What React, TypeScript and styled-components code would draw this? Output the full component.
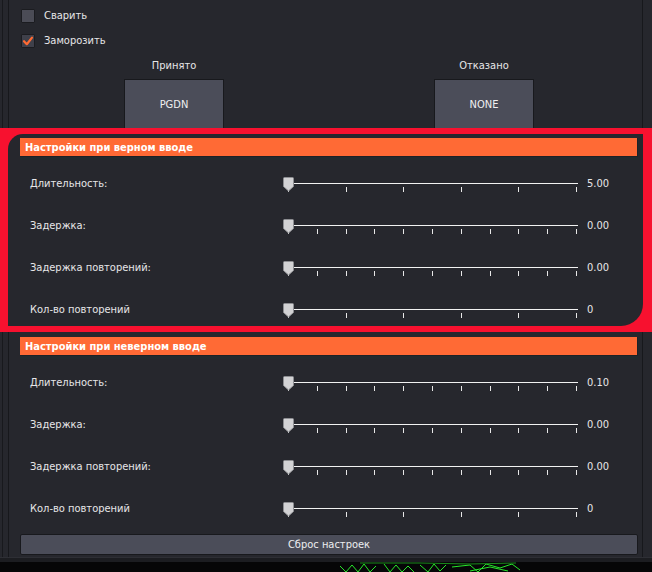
import React from "react";
import styled, { createGlobalStyle } from "styled-components";

const GlobalStyle = createGlobalStyle`
  html, body {
    margin: 0;
    padding: 0;
    background: #26272d;
    overflow: hidden;
  }
  * {
    box-sizing: border-box;
  }
`;

type SliderRow = {
  label: string;
  value: string;
  steps: number;
};

const goodInput: SliderRow[] = [
  { label: "Длительность:", value: "5.00", steps: 5 },
  { label: "Задержка:", value: "0.00", steps: 10 },
  { label: "Задержка повторений:", value: "0.00", steps: 10 },
  { label: "Кол-во повторений", value: "0", steps: 5 },
];

const badInput: SliderRow[] = [
  { label: "Длительность:", value: "0.10", steps: 10 },
  { label: "Задержка:", value: "0.00", steps: 10 },
  { label: "Задержка повторений:", value: "0.00", steps: 10 },
  { label: "Кол-во повторений", value: "0", steps: 5 },
];

const Thumb = () => (
  <ThumbIcon width="11" height="15" viewBox="0 0 11 15">
    <path
      d="M1.5 0.5 H9.5 Q10.5 0.5 10.5 1.5 V9.5 L5.5 14 L0.5 9.5 V1.5 Q0.5 0.5 1.5 0.5 Z"
      fill="#d2d2d4"
      stroke="#8d8e92"
      strokeWidth="1"
    />
  </ThumbIcon>
);

const Slider = ({ steps }: { steps: number }) => (
  <SliderBox>
    <Track />
    <Ticks>
      {Array.from({ length: steps + 1 }).map((_, i) => (
        <Tick key={i} />
      ))}
    </Ticks>
    <Thumb />
  </SliderBox>
);

const Section = ({
  title,
  rows,
  gapTop,
}: {
  title: string;
  rows: SliderRow[];
  gapTop: number;
}) => (
  <SectionBody>
    <Header>{title}</Header>
    <Rows $top={gapTop}>
      {rows.map((row) => (
        <Row key={row.label}>
          <Label>{row.label}</Label>
          <Slider steps={row.steps} />
          <Value>{row.value}</Value>
        </Row>
      ))}
    </Rows>
  </SectionBody>
);

const App = () => {
  return (
    <Page>
      <GlobalStyle />
      <Top>
        <CheckRow>
          <Box />
          <CheckLabel>Сварить</CheckLabel>
        </CheckRow>
        <CheckRow>
          <Box $checked>
            <svg width="12" height="12" viewBox="0 0 12 12">
              <path
                d="M2 6.2 L4.8 9.2 L10 2.6"
                fill="none"
                stroke="#ff6a33"
                strokeWidth="2.2"
                strokeLinecap="round"
                strokeLinejoin="round"
              />
            </svg>
          </Box>
          <CheckLabel>Заморозить</CheckLabel>
        </CheckRow>
        <Keys>
          <KeyColumn>
            <KeyCaption>Принято</KeyCaption>
            <KeyButton>PGDN</KeyButton>
          </KeyColumn>
          <KeyColumn>
            <KeyCaption>Отказано</KeyCaption>
            <KeyButton>NONE</KeyButton>
          </KeyColumn>
        </Keys>
      </Top>

      <Highlight $marked>
        <HighlightInner $marked>
          <Section title="Настройки при верном вводе" rows={goodInput} gapTop={17} />
        </HighlightInner>
      </Highlight>

      <Highlight>
        <HighlightInner>
          <Section title="Настройки при неверном вводе" rows={badInput} gapTop={17} />
          <ResetButton>Сброс настроек</ResetButton>
        </HighlightInner>
      </Highlight>

      <BottomEdge />
      <Footer>
        <svg width="652" height="10" viewBox="0 0 652 10">
          <g fill="none" stroke="#27e62a" strokeWidth="1">
            <polyline points="340,4 346,10 352,3 358,10 364,2 370,10 376,4" />
            <polyline points="384,2 390,10 396,3 402,10 408,4 414,10" />
            <polyline points="420,3 428,10 434,2 440,9 446,3" />
            <polyline points="452,5 470,3 478,10 486,2 500,6 512,2 520,8" />
            <polyline points="470,9 490,5 508,9" />
            <polyline points="360,1 420,1 470,2 516,1" stroke="#1a8a1c" />
          </g>
        </svg>
      </Footer>
    </Page>
  );
};

export default App;

const Page = styled.div`
  width: 652px;
  height: 572px;
  display: flex;
  flex-direction: column;
  font-family: "DejaVu Sans Condensed", "DejaVu Sans", "Liberation Sans", sans-serif;
  font-size: 11px;
  color: #e6e6e8;
  background: linear-gradient(
    to right,
    #26272d 2px,
    #18191d 2px 3px,
    #26272d 3px 8px,
    #17181c 8px 9px,
    #26272d 9px 642px,
    #17181c 642px 643px,
    #26272d 643px
  );
`;

const Top = styled.div`
  height: 128px;
  flex-shrink: 0;
  padding: 9px 0 0 21px;
  display: flex;
  flex-direction: column;
`;

const CheckRow = styled.div`
  display: flex;
  align-items: center;
  gap: 9px;
  height: 14px;
  margin-bottom: 11px;
`;

const Box = styled.div<{ $checked?: boolean }>`
  width: 14px;
  height: 14px;
  display: flex;
  align-items: center;
  justify-content: center;
  background: ${(p) => (p.$checked ? "#3f404a" : "#4b4c56")};
  border: 1px solid #1b1c20;
  border-radius: 1px;
`;

const CheckLabel = styled.span`
  line-height: 14px;
`;

const Keys = styled.div`
  display: flex;
  gap: 210px;
  margin-left: 103px;
`;

const KeyColumn = styled.div`
  width: 100px;
  display: flex;
  flex-direction: column;
  align-items: center;
  gap: 6px;
`;

const KeyCaption = styled.span`
  line-height: 14px;
`;

const KeyButton = styled.div`
  width: 100px;
  height: 50px;
  display: flex;
  align-items: center;
  justify-content: center;
  background: #4b4d59;
  border: 1px solid #18191d;
  color: #f0f0f2;
`;

const Highlight = styled.div<{ $marked?: boolean }>`
  flex-shrink: 0;
  padding: ${(p) => (p.$marked ? "6px 9px 6px 8px" : "5px 9px 0 8px")};
  background: ${(p) => (p.$marked ? "#f7112f" : "transparent")};
`;

const HighlightInner = styled.div<{ $marked?: boolean }>`
  padding: ${(p) => (p.$marked ? "4px 5px 6px 12px" : "0 5px 0 12px")};
  background: ${(p) => (p.$marked ? "#26272d" : "transparent")};
  border-radius: ${(p) => (p.$marked ? "15px 0 22px 0" : "0")};
`;

const SectionBody = styled.div`
  display: flex;
  flex-direction: column;
`;

const Header = styled.div`
  height: 19px;
  padding-left: 5px;
  display: flex;
  align-items: center;
  background: #ff6a35;
  border-right: 1px solid #1d2226;
  border-bottom: 1px solid #1d2226;
  box-shadow: 0 3px 0 #232a2e;
  color: #ffffff;
  font-weight: bold;
  font-size: 11px;
`;

const Rows = styled.div<{ $top: number }>`
  display: flex;
  flex-direction: column;
  gap: 22px;
  padding-top: ${(p) => p.$top}px;
`;

const Row = styled.div`
  display: grid;
  grid-template-columns: 253px 296px auto;
  align-items: center;
  height: 20px;
  padding-left: 10px;
`;

const Label = styled.span`
  line-height: 14px;
`;

const Value = styled.span`
  line-height: 14px;
  padding-left: 8px;
`;

const SliderBox = styled.div`
  position: relative;
  width: 296px;
  height: 16px;
  padding-top: 7px;
`;

const Track = styled.div`
  margin-left: 9px;
  width: 286px;
  height: 1px;
  background: #f2f2f2;
`;

const Ticks = styled.div`
  margin: 3px 0 0 5px;
  width: 289px;
  display: flex;
  justify-content: space-between;
`;

const Tick = styled.div`
  width: 1px;
  height: 5px;
  background: #e8e8e8;
`;

const ThumbIcon = styled.svg`
  position: absolute;
  left: 0;
  top: 1px;
`;

const ResetButton = styled.div`
  margin-top: 15px;
  height: 21px;
  display: flex;
  align-items: center;
  justify-content: center;
  background: #4b4d59;
  border: 1px solid #18191d;
  border-radius: 2px;
  color: #ededf0;
`;

const BottomEdge = styled.div`
  flex-shrink: 0;
  margin-top: 2px;
  height: 5px;
  background: #1c1d21;
  border-top: 1px solid #2e2f35;
`;

const Footer = styled.div`
  flex: 1;
  background: #060607;
  overflow: hidden;
`;
